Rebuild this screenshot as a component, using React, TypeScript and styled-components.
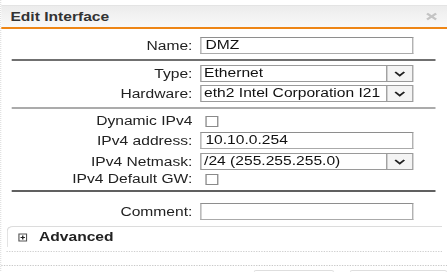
import styled, { createGlobalStyle } from "styled-components";

const GlobalStyle = createGlobalStyle`
  html, body {
    margin: 0;
    padding: 0;
    background: #ffffff;
    overflow: hidden;
  }
  body {
    font-family: "Liberation Sans", Arial, sans-serif;
    font-size: 12px;
    color: #222;
  }
`;

// the captured dialog is stretched sideways, so the page is drawn at 344px and widened
const Stage = styled.div`
  width: 344px;
  transform: scaleX(1.3);
  transform-origin: 0 0;
  border-left: 1px dotted #e2e2e2;
  box-sizing: border-box;
  padding-top: 5px;
`;

const TitleBar = styled.div`
  height: 24px;
  box-sizing: border-box;
  display: flex;
  align-items: center;
  justify-content: space-between;
  padding: 0 7px 0 7px;
  background: linear-gradient(#ececec, #f9f9f9);
  border-top: 1px solid #e4e4e4;
  border-bottom: 2px solid #ee8616;
`;

const Title = styled.span`
  font-weight: bold;
  font-size: 12px;
  color: #333;
`;

const Close = styled.svg`
  width: 10px;
  height: 9px;
`;

const Form = styled.div`
  display: flex;
  flex-direction: column;
`;

const Row = styled.div<{ $top: number }>`
  display: grid;
  grid-template-columns: 147px 164px;
  column-gap: 6px;
  align-items: center;
  margin-top: ${(p) => p.$top}px;
`;

const Label = styled.label`
  text-align: right;
  font-size: 12px;
  line-height: 14px;
  color: #222;
  white-space: nowrap;
`;

const TextInput = styled.div`
  height: 17px;
  box-sizing: border-box;
  border: 1px solid #aaaaaa;
  border-top-color: #8e8e8e;
  padding: 0 3px;
  font-size: 12px;
  line-height: 15px;
  color: #111;
  background: #fff;
`;

const SelectBox = styled.div`
  height: 17px;
  box-sizing: border-box;
  border: 1px solid #9a9a9a;
  display: flex;
  align-items: stretch;
  background: #fff;
`;

const SelectText = styled.span`
  flex: 1;
  white-space: nowrap;
  padding: 0 2px;
  font-size: 12px;
  line-height: 15px;
  color: #111;
`;

const DropButton = styled.span`
  width: 19px;
  border-left: 1px solid #9a9a9a;
  background: #f4f4f4;
  display: flex;
  align-items: center;
  justify-content: center;
`;

const Check = styled.span`
  width: 10px;
  height: 11px;
  box-sizing: border-box;
  border: 1px solid #8a8a8a;
  background: #fff;
  margin-left: 4px;
`;

const Divider = styled.div<{ $tone: string; $top: number }>`
  margin: ${(p) => p.$top}px 9px 0 8px;
  height: 2px;
  background: ${(p) => p.$tone};
`;

const Advanced = styled.div`
  margin: 6px 0 0 4px;
  height: 26px;
  box-sizing: border-box;
  border-bottom: 1px dotted #cfcfcf;
  width: 335px;
`;

const AdvancedHead = styled.div`
  height: 20px;
  border-top: 1px solid #dcdcdc;
  border-left: 1px solid #dcdcdc;
  border-top-left-radius: 5px;
  display: flex;
  align-items: center;
  gap: 9px;
  padding-left: 8px;
  font-weight: bold;
  font-size: 12px;
  color: #222;
`;

const PlusBox = styled.svg`
  width: 7px;
  height: 9px;
`;

const Footer = styled.div`
  margin-top: 13px;
  border-top: 1px dotted #c8c8c8;
  display: flex;
  justify-content: flex-end;
  gap: 12px;
  padding-top: 4px;
`;

const FooterButton = styled.div<{ $w: number }>`
  width: ${(p) => p.$w}px;
  height: 10px;
  border-top: 1px solid #dedede;
  border-left: 1px solid #e6e6e6;
  border-right: 1px solid #e6e6e6;
  border-radius: 2px 2px 0 0;
`;

function Chevron() {
  return (
    <svg width="9" height="6" viewBox="0 0 9 6">
      <path d="M1 1 L4.5 4.5 L8 1" fill="none" stroke="#222" strokeWidth="1.6" />
    </svg>
  );
}

function Select({ value }: { value: string }) {
  return (
    <SelectBox>
      <SelectText>{value}</SelectText>
      <DropButton>
        <Chevron />
      </DropButton>
    </SelectBox>
  );
}

export default function App() {
  return (
    <>
      <GlobalStyle />
      <Stage>
        <TitleBar>
          <Title>Edit Interface</Title>
          <Close viewBox="0 0 10 9">
            <path d="M1.5 1.5 L8.5 7.5 M8.5 1.5 L1.5 7.5" stroke="#c4c4c4" strokeWidth="2" />
          </Close>
        </TitleBar>
        <Form>
          <Row $top={8}>
            <Label>Name:</Label>
            <TextInput>DMZ</TextInput>
          </Row>
          <Divider $tone="#707070" $top={5} />
          <Row $top={4}>
            <Label>Type:</Label>
            <Select value="Ethernet" />
          </Row>
          <Row $top={3}>
            <Label>Hardware:</Label>
            <Select value="eth2 Intel Corporation I21" />
          </Row>
          <Divider $tone="#ababab" $top={5} />
          <Row $top={5}>
            <Label>Dynamic IPv4</Label>
            <Check />
          </Row>
          <Row $top={4}>
            <Label>IPv4 address:</Label>
            <TextInput>10.10.0.254</TextInput>
          </Row>
          <Row $top={4}>
            <Label>IPv4 Netmask:</Label>
            <Select value="/24 (255.255.255.0)" />
          </Row>
          <Row $top={2}>
            <Label>IPv4 Default GW:</Label>
            <Check />
          </Row>
          <Divider $tone="#606060" $top={4} />
          <Row $top={11}>
            <Label>Comment:</Label>
            <TextInput />
          </Row>
          <Advanced>
            <AdvancedHead>
              <PlusBox viewBox="0 0 7 9">
                <rect x="0.5" y="1" width="6" height="7" fill="#fff" stroke="#555" strokeWidth="1" />
                <path d="M1.8 4.5 H5.2 M3.5 2.6 V6.4" stroke="#222" strokeWidth="1" />
              </PlusBox>
              Advanced
            </AdvancedHead>
          </Advanced>
          <Footer>
            <FooterButton $w={60} />
            <FooterButton $w={73} />
          </Footer>
        </Form>
      </Stage>
    </>
  );
}
